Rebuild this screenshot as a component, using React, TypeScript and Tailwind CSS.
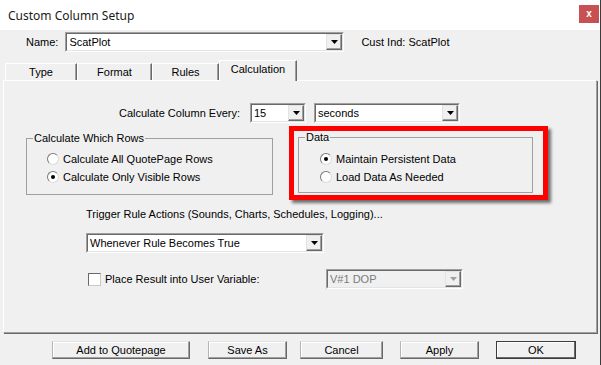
import React from "react";

function Arrow({ disabled }: { disabled?: boolean }) {
  return (
    <div className="w-[16px] h-full flex items-center justify-center bg-[#f0f0f0] border-t border-l border-t-[#e3e3e3] border-l-[#e3e3e3] border-r border-b border-r-[#696969] border-b-[#696969] shadow-[inset_-1px_-1px_0_#a0a0a0]">
      <svg width="7" height="4" viewBox="0 0 7 4">
        <path d="M0 0 H7 L3.5 4 Z" fill={disabled ? "#a0a0a0" : "#000"} />
      </svg>
    </div>
  );
}

function Combo({
  text,
  width,
  disabled,
}: {
  text: string;
  width: string;
  disabled?: boolean;
}) {
  return (
    <div
      className={`${width} h-[20px] border-t border-l border-t-[#a0a0a0] border-l-[#a0a0a0] border-b border-r border-b-white border-r-white`}
    >
      <div
        className={`h-full flex border-t border-l border-t-[#696969] border-l-[#696969] border-b border-r border-b-[#e3e3e3] border-r-[#e3e3e3] ${
          disabled ? "bg-[#f0f0f0]" : "bg-white"
        }`}
      >
        <div
          className={`flex-1 pl-[2px] flex items-center ${
            disabled ? "text-[#7a7a7a]" : "text-black"
          }`}
        >
          {text}
        </div>
        <Arrow disabled={disabled} />
      </div>
    </div>
  );
}

function Radio({ checked, label }: { checked?: boolean; label: string }) {
  return (
    <div className="h-[18px] flex items-center">
      <div className="w-[12px] h-[12px] rounded-full bg-white border border-t-[#7a7a7a] border-l-[#7a7a7a] border-b-[#dcdcdc] border-r-[#dcdcdc] flex items-center justify-center">
        {checked && <div className="w-[4px] h-[4px] rounded-full bg-black" />}
      </div>
      <span className="ml-[4px]">{label}</span>
    </div>
  );
}

function Button({
  label,
  width,
  margin,
  isDefault,
}: {
  label: string;
  width: string;
  margin: string;
  isDefault?: boolean;
}) {
  return (
    <div
      className={`${width} ${margin} h-[18px] flex items-center justify-center bg-[#f0f0f0] ${
        isDefault
          ? "border border-[#3c3c3c] shadow-[inset_-1px_-1px_0_#696969,inset_1px_1px_0_#fff]"
          : "border-t border-l border-t-[#e3e3e3] border-l-[#b4b4b4] border-b border-r border-b-[#696969] border-r-[#696969] shadow-[inset_-1px_-1px_0_#a0a0a0,inset_1px_1px_0_#fff]"
      }`}
    >
      {label}
    </div>
  );
}

const tabs = ["Type", "Format", "Rules", "Calculation"];
const tabWidths = ["w-[72px]", "w-[75px]", "w-[67px]", "w-[78px]"];

export default function App() {
  return (
    <div className="w-[601px] h-[365px] flex overflow-hidden bg-[#f0f0f0] text-[11px] leading-[13px] text-black font-['Liberation_Sans',Arial,sans-serif]">
      <div className="w-[600px] flex flex-col">
        {/* Title bar */}
        <div className="h-[30px] bg-white flex items-center justify-between">
          <span className="pl-[8px] text-[12px] font-['Noto_Sans',sans-serif] text-[#1a1a1a]">
            Custom Column Setup
          </span>
          <div className="w-[20px] h-[18px] mr-[1px] mb-[2px] bg-[#c75050] flex items-center justify-center text-white text-[10px] font-bold leading-none">
            x
          </div>
        </div>

        {/* Name row */}
        <div className="mt-[2px] h-[20px] flex items-center pl-[26px]">
          <span>Name:</span>
          <div className="ml-[7px]">
            <Combo text="ScatPlot" width="w-[279px]" />
          </div>
          <span className="ml-[17px]">Cust Ind: ScatPlot</span>
        </div>

        {/* Tabs */}
        <div className="mt-[8px] h-[20px] flex items-end pl-[5px]">
          {tabs.map((t, i) => {
            const active = t === "Calculation";
            return (
              <div
                key={t}
                className={`${tabWidths[i]} ${
                  active ? "h-[21px] -mb-[1px] relative z-10 pb-[3px]" : "h-[17px]"
                } flex items-center justify-center bg-[#f0f0f0] border-t border-l border-t-white border-l-white border-r border-r-[#696969] shadow-[inset_-1px_0_0_#a0a0a0]`}
              >
                {t}
              </div>
            );
          })}
        </div>

        {/* Panel */}
        <div className="mx-[3px] h-[253px] border-t border-l border-t-white border-l-white border-r border-b border-r-[#a0a0a0] border-b-[#a0a0a0] shadow-[1px_1px_0_#696969] flex flex-col">
          <div className="mt-[22px] h-[20px] flex items-center">
            <div className="w-[236px] text-right">Calculate Column Every:</div>
            <div className="ml-[10px]">
              <Combo text="15" width="w-[56px]" />
            </div>
            <div className="ml-[8px]">
              <Combo text="seconds" width="w-[146px]" />
            </div>
          </div>

          <div className="mt-[3px] flex items-start">
            <fieldset className="ml-[22px] mt-[6px] w-[247px] h-[63px] border border-[#a0a0a0]">
              <legend className="ml-[6px] px-[1px]">Calculate Which Rows</legend>
              <div className="pl-[20px] pt-[5px]">
                <Radio label="Calculate All QuotePage Rows" />
                <Radio checked label="Calculate Only Visible Rows" />
              </div>
            </fieldset>

            <div className="ml-[16px] w-[259px] h-[74px] border-[5px] border-[#ff0000] shadow-[3px_3px_3px_rgba(0,0,0,0.55)] pl-[4px]">
              <fieldset className="w-[235px] h-[62px] border border-[#a0a0a0]">
                <legend className="ml-[6px] px-[1px]">Data</legend>
                <div className="pl-[21px] pt-[6px]">
                  <Radio checked label="Maintain Persistent Data" />
                  <Radio label="Load Data As Needed" />
                </div>
              </fieldset>
            </div>
          </div>

          <div className="mt-[8px] ml-[82px]">
            Trigger Rule Actions (Sounds, Charts, Schedules, Logging)...
          </div>

          <div className="mt-[12px] ml-[82px]">
            <Combo text="Whenever Rule Becomes True" width="w-[238px]" />
          </div>

          <div className="mt-[16px] ml-[84px] flex items-center">
            <div className="w-[238px] flex items-center">
              <div className="w-[13px] h-[13px] bg-white border border-t-[#696969] border-l-[#696969] border-b-[#c8c8c8] border-r-[#c8c8c8]" />
              <span className="ml-[4px]">Place Result into User Variable:</span>
            </div>
            <Combo text="V#1  DOP" width="w-[137px]" disabled />
          </div>
        </div>

        {/* Buttons */}
        <div className="mt-[8px] flex">
          <Button label="Add to Quotepage" width="w-[138px]" margin="ml-[52px]" />
          <Button label="Save As" width="w-[79px]" margin="ml-[18px]" />
          <Button label="Cancel" width="w-[83px]" margin="ml-[13px]" />
          <Button label="Apply" width="w-[79px]" margin="ml-[17px]" />
          <Button label="OK" width="w-[80px]" margin="ml-[17px]" isDefault />
        </div>
      </div>
      <div className="w-[1px] bg-[#3c3c3c]" />
    </div>
  );
}
